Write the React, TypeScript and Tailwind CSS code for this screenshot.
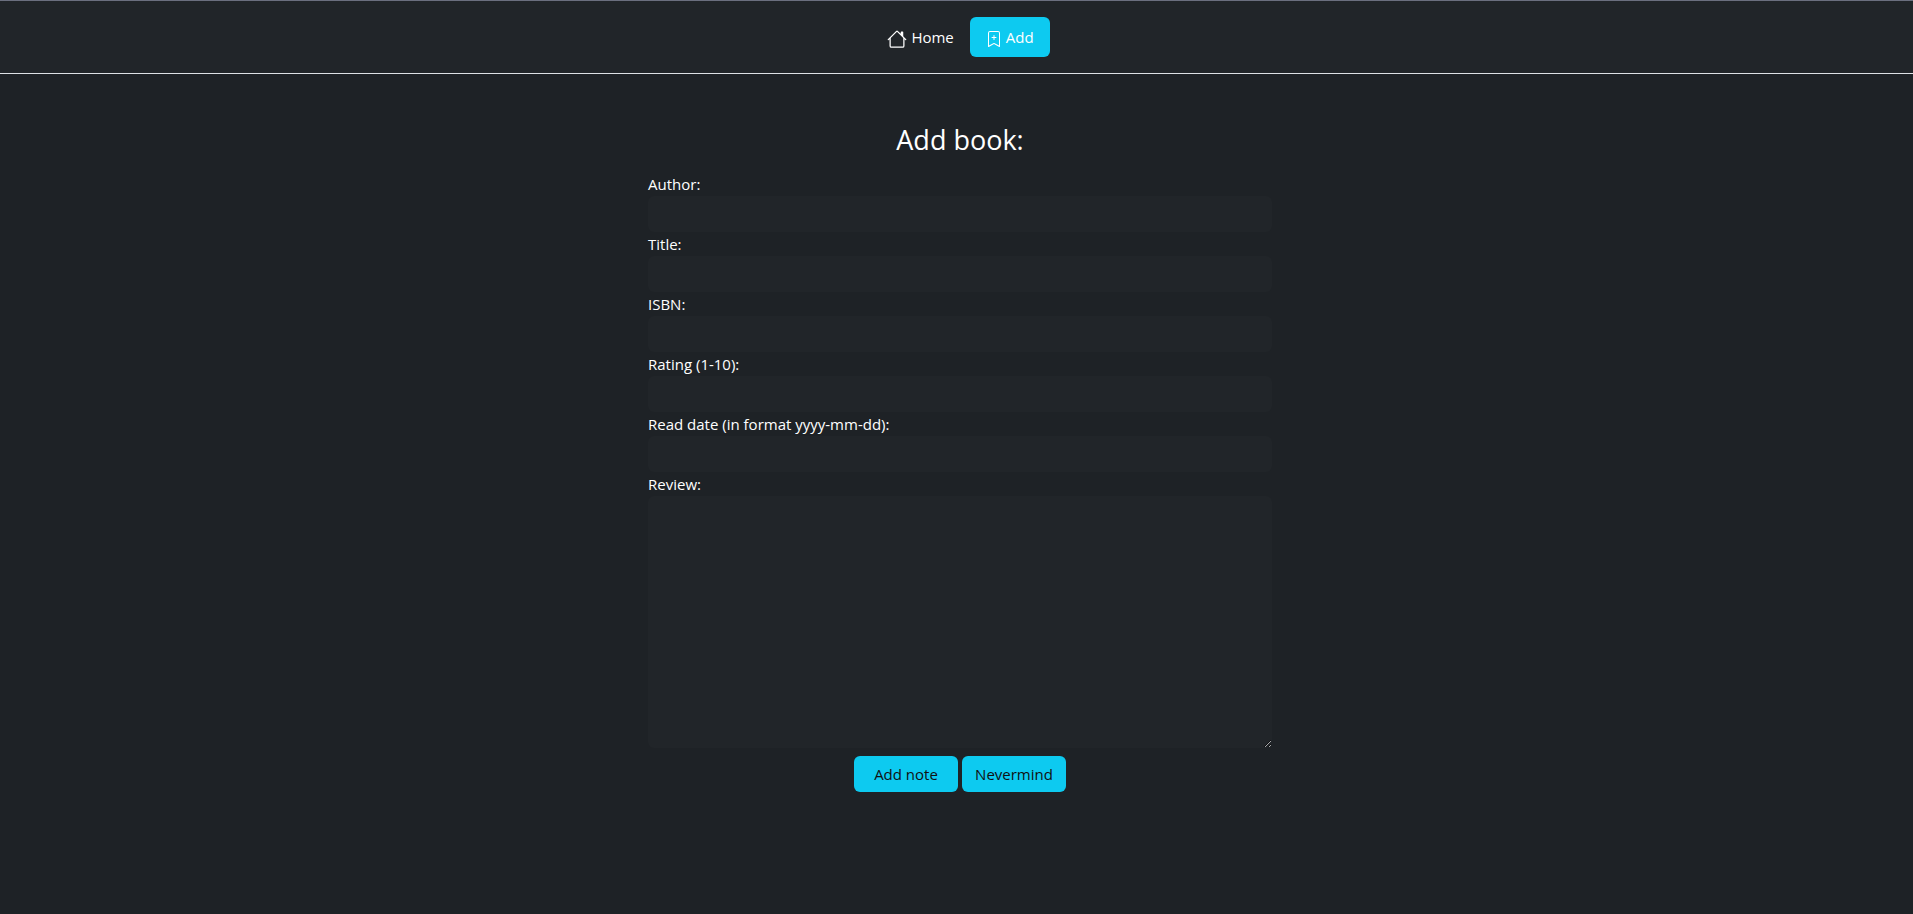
import { BsBookmarkPlus, BsHouse } from "react-icons/bs";

const fields = [
  { id: "author", label: "Author:" },
  { id: "title", label: "Title:" },
  { id: "isbn", label: "ISBN:" },
  { id: "rating", label: "Rating (1-10):" },
  { id: "readDate", label: "Read date (in format yyyy-mm-dd):" },
];

export default function App() {
  return (
    <div className="min-h-screen bg-[#1e2226] font-['Open_Sans',sans-serif] text-[15px] leading-6 text-white">
      <nav className="flex items-center justify-center border-t border-b border-t-[#6b6f7f] border-b-[#dee2e6] bg-[#212529] py-4 pl-2">
        <a href="#home" className="flex h-10 items-center gap-1 rounded-md px-4">
          <BsHouse size={20} className="mt-1" />
          Home
        </a>
        <a href="#add" className="flex h-10 items-center gap-1 rounded-md bg-[#0dcaf0] px-4">
          <BsBookmarkPlus size={16} className="mt-1" />
          Add
        </a>
      </nav>
      <main className="pt-12 pl-[7px]">
        <form className="mx-auto flex w-full max-w-[624px] flex-col">
          <h1 className="mb-3.5 text-center text-[27px] leading-9">Add book:</h1>
          {fields.map((field) => (
            <div key={field.id} className="flex flex-col">
              <label htmlFor={field.id}>{field.label}</label>
              <input id={field.id} type="text" className="h-9 rounded-md bg-[#212529] px-3 outline-none" />
            </div>
          ))}
          <label htmlFor="review">Review:</label>
          <textarea id="review" className="h-[252px] resize rounded-md bg-[#212529] px-3 outline-none" />
          <div className="flex justify-center gap-1 pt-2 text-[#111111]">
            <button type="submit" className="h-9 w-26 rounded-md bg-[#0dcaf0]">Add note</button>
            <button type="button" className="h-9 w-26 rounded-md bg-[#0dcaf0]">Nevermind</button>
          </div>
        </form>
      </main>
    </div>
  );
}
